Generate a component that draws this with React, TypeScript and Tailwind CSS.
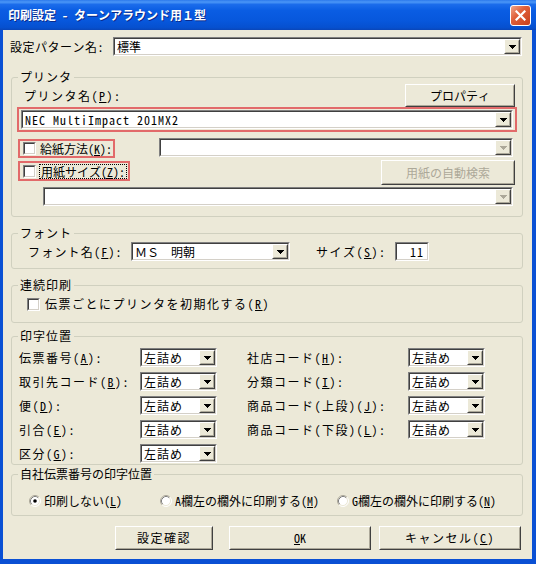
import type { ReactNode } from "react";

const ui = "font-['Noto_Sans_Mono_CJK_JP','Noto_Sans_CJK_JP',sans-serif]";

const U = ({ c }: { c: string }) => <span className="underline underline-offset-[1px]">{c}</span>;

function Sunken({ className = "", children }: { className?: string; children?: ReactNode }) {
  return (
    <div className={`border border-t-[#808080] border-l-[#808080] border-r-white border-b-white ${className}`}>
      <div className="flex h-full w-full border border-t-[#404040] border-l-[#404040] border-r-[#D4D0C8] border-b-[#D4D0C8] bg-white">
        {children}
      </div>
    </div>
  );
}

function Raised({ className = "", children }: { className?: string; children?: ReactNode }) {
  return (
    <div className={`border border-t-white border-l-white border-r-[#404040] border-b-[#404040] bg-[#ECE9D8] ${className}`}>
      <div className="flex h-full w-full items-center justify-center border border-t-[#ECE9D8] border-l-[#ECE9D8] border-r-[#ACA899] border-b-[#ACA899]">
        {children}
      </div>
    </div>
  );
}

function DropArrow({ disabled }: { disabled?: boolean }) {
  const c = disabled ? "#ACA899" : "#000";
  return (
    <Raised className="h-full w-[16px] shrink-0">
      <svg width="7" height="4" viewBox="0 0 7 4" shapeRendering="crispEdges">
        <rect x="0" y="0" width="7" height="1" fill={c} />
        <rect x="1" y="1" width="5" height="1" fill={c} />
        <rect x="2" y="2" width="3" height="1" fill={c} />
        <rect x="3" y="3" width="1" height="1" fill={c} />
      </svg>
    </Raised>
  );
}

function Combo({
  className = "",
  text = "",
  disabled,
  textClass = "",
}: {
  className?: string;
  text?: string;
  disabled?: boolean;
  textClass?: string;
}) {
  return (
    <Sunken className={`h-[19px] shrink-0 ${className}`}>
      <span className={`min-w-0 flex-1 self-center whitespace-nowrap pl-[2px] ${textClass}`}>{text}</span>
      <DropArrow disabled={disabled} />
    </Sunken>
  );
}

const Check = () => <Sunken className="h-[13px] w-[13px] shrink-0" />;

function Radio({ checked }: { checked?: boolean }) {
  return (
    <svg width="12" height="12" viewBox="0 0 12 12" className="shrink-0">
      <circle cx="6" cy="6" r="5" fill="#fff" />
      <path d="M2.11 9.89A5.5 5.5 0 0 1 9.89 2.11" stroke="#ACA899" fill="none" />
      <path d="M9.89 2.11A5.5 5.5 0 0 1 2.11 9.89" stroke="#fff" fill="none" />
      <path d="M2.82 9.18A4.5 4.5 0 0 1 9.18 2.82" stroke="#808080" fill="none" />
      <path d="M9.18 2.82A4.5 4.5 0 0 1 2.82 9.18" stroke="#ECE9D8" fill="none" />
      {checked && <circle cx="6" cy="6" r="1.8" fill="#000" />}
    </svg>
  );
}

function Group({
  title,
  className = "",
  legendClass = "tracking-[1px]",
  children,
}: {
  title: string;
  className?: string;
  legendClass?: string;
  children: ReactNode;
}) {
  return (
    <fieldset className={`ml-[8px] mr-[9px] rounded-[3px] border border-[#D0D0BF] ${className}`}>
      <legend className={`ml-[6px] px-[2px] leading-[14px] ${legendClass}`}>{title}</legend>
      {children}
    </fieldset>
  );
}

const rows: [ReactNode, ReactNode | null][] = [
  [<>伝票番号(<U c="A" />):</>, <>社店コード(<U c="H" />):</>],
  [<>取引先コード(<U c="B" />):</>, <>分類コード(<U c="I" />):</>],
  [<>便(<U c="D" />):</>, <>商品コード(上段)(<U c="J" />):</>],
  [<>引合(<U c="E" />):</>, <>商品コード(下段)(<U c="L" />):</>],
  [<>区分(<U c="G" />):</>, null],
];

export default function App() {
  return (
    <div className={`flex h-[564px] w-[536px] flex-col bg-[#0A50D4] text-[12px] leading-[14px] text-black ${ui}`}>
      <div className="flex h-[30px] shrink-0 items-center justify-between bg-[linear-gradient(180deg,#2C79EC_0%,#4B97F7_7%,#1B6CEB_15%,#0A5DE3_35%,#0757DC_70%,#0650CF_92%,#0A46B8_100%)] pl-[8px] pr-[5px]">
        <span className="font-bold text-white [text-shadow:1px_1px_0_#0B2A8A]">印刷設定 - ターンアラウンド用１型</span>
        <div className="flex h-[21px] w-[21px] items-center justify-center rounded-[3px] border border-white bg-[linear-gradient(135deg,#F0A68A_0%,#E0603A_40%,#C8401C_100%)]">
          <svg width="11" height="11" viewBox="0 0 11 11">
            <path d="M1.5 1.5L9.5 9.5M9.5 1.5L1.5 9.5" stroke="#fff" strokeWidth="2.2" strokeLinecap="square" />
          </svg>
        </div>
      </div>

      <div className="ml-[3px] mr-[4px] flex h-[529px] flex-col bg-[#ECE9D8]">
        <div className="mt-[7px] flex h-[19px] items-center pl-[7px]">
          <span className="w-[103px] shrink-0 tracking-[0.5px]">設定パターン名:</span>
          <Combo className="w-[409px]" text="標準" />
        </div>

        <Group title="プリンタ" className="mt-[14px]">
          <div className="flex flex-col px-[5px] pb-[10px]">
            <div className="flex h-[23px] items-center justify-between">
              <span className="pl-[7px] tracking-[1.5px]">
                プリンタ名(<U c="P" />):
              </span>
              <Raised className="mr-[2px] h-[23px] w-[110px]">プロパティ</Raised>
            </div>
            <div className="border-2 border-[#E26A6A] px-[2px] py-[1px]">
              <Combo className="w-full" text="NEC MultiImpact 201MX2" textClass="tracking-[1px]" />
            </div>
            <div className="mt-[6px] flex h-[20px] items-start">
              <div className="ml-[1px] mt-[1px] flex h-[19px] items-center border-2 border-[#E26A6A] pl-[3px] pr-[1px]">
                <Check />
                <span className="ml-[4px]">
                  給紙方法(<U c="K" />):
                </span>
              </div>
              <Combo disabled className="ml-auto mr-[4px] w-[354px]" />
            </div>
            <div className="mt-[2px] flex h-[25px] items-start">
              <div className="ml-[1px] mt-[1px] flex h-[20px] items-center border-2 border-[#E26A6A] pl-[3px] pr-[1px]">
                <Check />
                <span className="ml-[3px] border border-dotted border-black px-[1px] leading-[13px]">
                  用紙サイズ(<U c="Z" />):
                </span>
              </div>
              <Raised className="ml-auto mr-[2px] h-[25px] w-[134px] text-[#ACA899]">用紙の自動検索</Raised>
            </div>
            <Combo disabled className="ml-[26px] mr-[4px] mt-[2px] w-[470px]" />
          </div>
        </Group>

        <Group title="フォント" className="mt-[9px]">
          <div className="flex items-center pb-[7px] pl-[16px] pt-[2px]">
            <span className="w-[103px] shrink-0 tracking-[1.2px]">
              フォント名(<U c="F" />):
            </span>
            <Combo className="w-[159px]" text="ＭＳ　明朝" />
            <span className="ml-[26px] w-[79px] shrink-0 tracking-[1.5px]">
              サイズ(<U c="S" />):
            </span>
            <Sunken className="h-[19px] w-[34px]">
              <span className="flex-1 self-center pr-[3px] text-right tracking-[1px]">11</span>
            </Sunken>
          </div>
        </Group>

        <Group title="連続印刷" className="mt-[9px]">
          <div className="mb-[10px] mt-[4px] flex h-[16px] items-center pl-[15px]">
            <Check />
            <span className="ml-[5px] tracking-[1.5px]">
              伝票ごとにプリンタを初期化する(<U c="R" />)
            </span>
          </div>
        </Group>

        <Group title="印字位置" className="mt-[6px]">
          <div className="flex flex-col gap-[5px] pb-[1px] pl-[7px] pt-[5px]">
            {rows.map(([left, right], i) => (
              <div key={i} className="flex h-[19px] items-center">
                <span className="w-[121px] shrink-0 tracking-[1.5px]">{left}</span>
                <Combo className="w-[77px]" text="左詰め" textClass="tracking-[1px]" />
                {right && (
                  <>
                    <span className="ml-[30px] w-[161px] shrink-0 tracking-[1.5px]">{right}</span>
                    <Combo className="w-[77px]" text="左詰め" textClass="tracking-[1px]" />
                  </>
                )}
              </div>
            ))}
          </div>
        </Group>

        <Group title="自社伝票番号の印字位置" className="mt-[2px]" legendClass="">
          <div className="mb-[6px] mt-[12px] flex h-[16px] items-center pl-[17px]">
            <div className="flex w-[131px] items-center gap-[3px]">
              <Radio checked />
              <span>
                印刷しない(<U c="L" />)
              </span>
            </div>
            <div className="flex w-[177px] items-center gap-[3px]">
              <Radio />
              <span>
                A欄左の欄外に印刷する(<U c="M" />)
              </span>
            </div>
            <div className="flex items-center gap-[3px]">
              <Radio />
              <span>
                G欄左の欄外に印刷する(<U c="N" />)
              </span>
            </div>
          </div>
        </Group>

        <div className="mt-[10px] flex h-[24px] pl-[112px]">
          <Raised className="w-[98px] tracking-[1.5px]">設定確認</Raised>
          <Raised className="ml-[16px] w-[142px]">
            <span>
              <U c="O" />K
            </span>
          </Raised>
          <Raised className="ml-[8px] w-[142px] tracking-[1.5px]">
            <span>
              キャンセル(<U c="C" />)
            </span>
          </Raised>
        </div>
      </div>
    </div>
  );
}
